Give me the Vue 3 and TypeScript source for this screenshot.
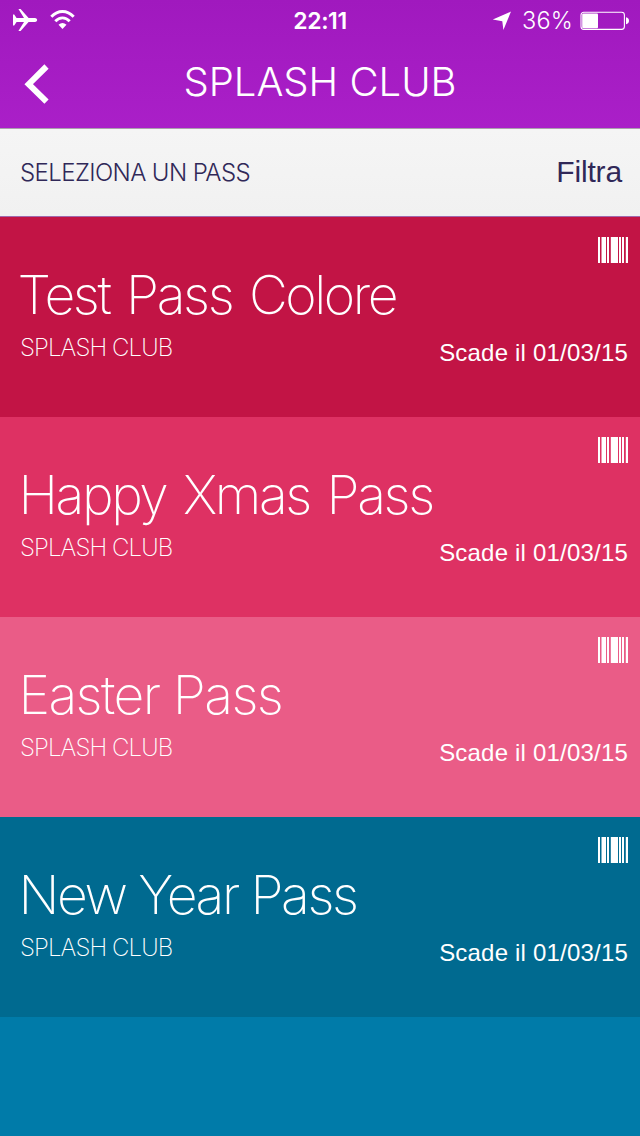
<script setup lang="ts">
interface Pass {
  name: string
  club: string
  expires: string
  tone: string
}

const passes: Pass[] = [
  { name: 'Test Pass Colore', club: 'SPLASH CLUB', expires: 'Scade il 01/03/15', tone: 'crimson' },
  { name: 'Happy Xmas Pass', club: 'SPLASH CLUB', expires: 'Scade il 01/03/15', tone: 'rose' },
  { name: 'Easter Pass', club: 'SPLASH CLUB', expires: 'Scade il 01/03/15', tone: 'pink' },
  { name: 'New Year Pass', club: 'SPLASH CLUB', expires: 'Scade il 01/03/15', tone: 'teal' },
]
</script>

<template>
  <main class="screen">
    <header class="top">
      <div class="status">
        <div class="status-left">
          <svg class="plane" width="26" height="24" viewBox="0 0 26 24" fill="#fff">
            <path d="M1 6.4h1.2L4.6 9.9h7.4L6.4 1h2.2l8 8.9h6.6q2 .5 2 2.1t-2 2.1h-6.6L8.600 23H6.400l5.600-8.900H4.600L2.200 17.600H1z" />
          </svg>
          <svg class="wifi" width="26" height="20" viewBox="0 0 26 20">
            <g fill="none" stroke="#fff" stroke-width="2.9">
              <path d="M1.300 6.700C8-.3 17-.3 23.700 6.700" />
              <path d="M5.300 11.300c4.300-4.600 10.100-4.600 14.400 0" />
            </g>
            <path fill="#fff" d="M8.500 14.700q4-3.400 8 0l-4 4.400z" />
          </svg>
        </div>
        <span class="clock">22:11</span>
        <div class="status-right">
          <svg class="arrow" width="20" height="20" viewBox="0 0 20 20" fill="#fff">
            <path d="M19 .6 11.4 19l-1.100-8.800L.8 8.500z" />
          </svg>
          <span class="percent">36%</span>
          <svg class="battery" width="50" height="20" viewBox="0 0 50 20">
            <rect x="1" y="1.200" width="43.400" height="17.200" rx="2.800" fill="none" stroke="#fff" stroke-width="1.100" />
            <rect x="2.200" y="2.500" width="15.800" height="14.700" rx="1" fill="#fff" />
            <path d="M46 6.300q3 .7 3 3.500t-3 3.500z" fill="#fff" />
          </svg>
        </div>
      </div>
      <nav class="nav">
        <svg class="back" width="26" height="42" viewBox="0 0 26 42">
          <path d="M22.500 3.500 4.700 21.200l17.800 17.500" fill="none" stroke="#fff" stroke-width="6" />
        </svg>
        <h1 class="title">SPLASH CLUB</h1>
      </nav>
    </header>

    <section class="filter">
      <span class="prompt">SELEZIONA UN PASS</span>
      <span class="action">Filtra</span>
    </section>

    <article v-for="pass in passes" :key="pass.name" class="card" :class="pass.tone">
      <div class="info">
        <h2 class="name">{{ pass.name }}</h2>
        <p class="club">{{ pass.club }}</p>
      </div>
      <div class="meta">
        <svg class="barcode" width="30" height="26" viewBox="0 0 30 26" fill="#fff">
          <path d="M0 0h2v26H0zM3.500 0H8v26H3.500zM9 0h2v26H9zM12.800 0h7.200v26h-7.200zM21 0h2v26h-2zM24 0h2v26h-2zM27.800 0H30v26h-2.200z" />
        </svg>
        <p class="expires">{{ pass.expires }}</p>
      </div>
    </article>
  </main>
</template>

<style>
body {
  margin: 0;
  background: #007ba9;
}
</style>

<style scoped>
.screen {
  width: 640px;
  height: 1136px;
  overflow: hidden;
  background: #007ba9;
  color: #fff;
  font-family: "Liberation Sans", Arial, sans-serif;
}
h1, h2, p { margin: 0; font-weight: inherit; }
svg { display: block; flex: none; }
.top {
  height: 128px;
  background: linear-gradient(#a019be, #aa1fc8);
}
.status {
  height: 40px;
  display: grid;
  grid-template-columns: 1fr auto 1fr;
}
.status-left, .status-right { display: flex; }
.status-left { padding-left: 12px; }
.plane { margin-top: 8px; }
.wifi { margin: 10px 0 0 12px; }
.clock {
  font: 600 23px/42px Inter, sans-serif;
  letter-spacing: -0.4px;
}
.status-right { justify-content: flex-end; padding-right: 10px; }
.arrow { margin: 11px 10px 0 0; }
.percent {
  font: 300 23.5px/42px Inter, sans-serif;
  letter-spacing: 0.2px;
}
.battery { margin: 11px 0 0 7px; }
.nav {
  height: 88px;
  display: grid;
  grid-template-columns: 60px 1fr 60px;
}
.back { margin: 23px 0 0 24px; }
.title {
  font: 300 40px/84px Inter, sans-serif;
  text-align: center;
  white-space: nowrap;
}
.filter {
  height: 89px;
  box-sizing: border-box;
  display: flex;
  justify-content: space-between;
  padding: 0 18px 0 20px;
  border-top: 1px solid #aaa0ae;
  border-bottom: 1px solid #a06aae;
  background: linear-gradient(#f5f5f5, #f1f1f1);
  color: #302858;
}
.prompt {
  font: 300 24px/88px Inter, sans-serif;
  letter-spacing: -0.6px;
}
.action { font-size: 30px; line-height: 85px; letter-spacing: -0.15px; }
.card {
  height: 200px;
  display: flex;
  justify-content: space-between;
}
.crimson { background: #c21445; }
.rose { background: #de3163; }
.pink { background: #ea5c87; }
.teal { background: #006a90; }
.info { width: 410px; padding: 46px 0 0 20px; }
.name {
  margin-left: -1.5px;
  font: 200 53.5px/64px Inter, sans-serif;
  letter-spacing: -2.4px;
  white-space: nowrap;
}
.crimson .name { margin-left: -2.5px; word-spacing: 4px; }
.rose .name { word-spacing: 4px; }
.pink .name { letter-spacing: -1.6px; }
.club {
  margin-top: 6px;
  font: 200 24px/30px Inter, sans-serif;
  letter-spacing: -0.9px;
}
.meta {
  display: flex;
  flex-direction: column;
  align-items: flex-end;
  padding: 20px 12px 0 0;
}
.expires {
  margin-top: 75px;
  font-size: 24px;
  line-height: 30px;
  letter-spacing: 0.2px;
  white-space: nowrap;
}
</style>
